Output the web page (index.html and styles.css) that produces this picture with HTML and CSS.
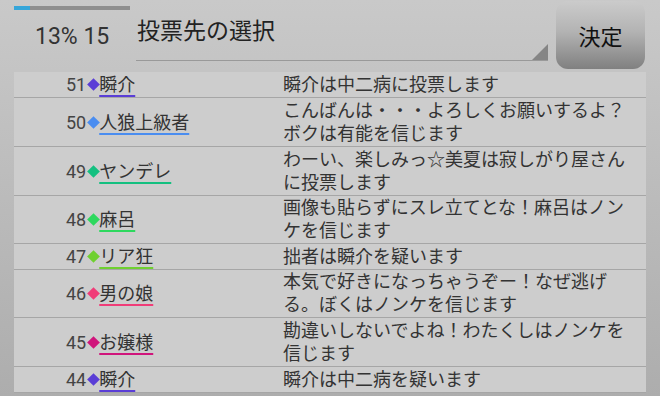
FILE: index.html
```html
<!DOCTYPE html>
<html lang="ja">
<head>
    <meta charset="UTF-8">
    <meta name="viewport" content="width=device-width, initial-scale=1.0">
    <title>投票先の選択</title>
    <link rel="stylesheet" href="styles.css">
</head>
<body>
    <div class="header">
        <div class="status">
            <div class="progress"><div class="progress-fill"></div></div>
            <div class="counter">13% 15</div>
        </div>
        <div class="spinner">
            <span class="spinner-text">投票先の選択</span>
            <span class="spinner-arrow"></span>
        </div>
        <button class="decide">決定</button>
    </div>

    <div class="log">
        <div class="row">
            <div class="who"><span class="num">51</span><span class="mark c-purple"></span><span class="name c-purple">瞬介</span></div>
            <div class="msg">瞬介は中二病に投票します</div>
        </div>
        <div class="row">
            <div class="who"><span class="num">50</span><span class="mark c-blue"></span><span class="name c-blue">人狼上級者</span></div>
            <div class="msg">こんばんは・・・よろしくお願いするよ？ボクは有能を信じます</div>
        </div>
        <div class="row">
            <div class="who"><span class="num">49</span><span class="mark c-teal"></span><span class="name c-teal">ヤンデレ</span></div>
            <div class="msg">わーい、楽しみっ☆美夏は寂しがり屋さんに投票します</div>
        </div>
        <div class="row">
            <div class="who"><span class="num">48</span><span class="mark c-green"></span><span class="name c-green">麻呂</span></div>
            <div class="msg">画像も貼らずにスレ立てとな！麻呂はノンケを信じます</div>
        </div>
        <div class="row">
            <div class="who"><span class="num">47</span><span class="mark c-lime"></span><span class="name c-lime">リア狂</span></div>
            <div class="msg">拙者は瞬介を疑います</div>
        </div>
        <div class="row">
            <div class="who"><span class="num">46</span><span class="mark c-pink"></span><span class="name c-pink">男の娘</span></div>
            <div class="msg">本気で好きになっちゃうぞー！なぜ逃げる。ぼくはノンケを信じます</div>
        </div>
        <div class="row">
            <div class="who"><span class="num">45</span><span class="mark c-magenta"></span><span class="name c-magenta">お嬢様</span></div>
            <div class="msg">勘違いしないでよね！わたくしはノンケを信じます</div>
        </div>
        <div class="row">
            <div class="who"><span class="num">44</span><span class="mark c-purple"></span><span class="name c-purple">瞬介</span></div>
            <div class="msg">瞬介は中二病を疑います</div>
        </div>
    </div>
</body>
</html>
```

FILE: styles.css
```css
body {
    margin: 0;
    width: 660px;
    height: 396px;
    overflow: hidden;
    background: linear-gradient(#c9c9c9, #adadad);
    font-family: Roboto, "Noto Sans CJK JP", sans-serif;
    color: #333;
}

.header {
    display: flex;
    height: 72px;
    padding-left: 14px;
    box-sizing: border-box;
}

.status {
    width: 122px;
}

.progress {
    width: 116px;
    height: 4px;
    margin-top: 6px;
    background-color: #8f8f8f;
}

.progress-fill {
    width: 16px;
    height: 4px;
    background-color: #36a6d9;
}

.counter {
    padding-left: 21px;
    margin-top: 12px;
    font-size: 23px;
    line-height: 30px;
    color: #333;
}

.spinner {
    position: relative;
    width: 412px;
    height: 61px;
    border-bottom: 1px solid #999;
    box-sizing: border-box;
}

.spinner-text {
    display: block;
    padding-left: 1px;
    margin-top: 16px;
    font-size: 23px;
    line-height: 32px;
    color: #222;
}

.spinner-arrow {
    position: absolute;
    right: 0;
    bottom: 0;
    width: 0;
    height: 0;
    border-left: 16px solid transparent;
    border-bottom: 16px solid #858585;
}

.decide {
    width: 89px;
    height: 68px;
    margin: 1px 0 0 8px;
    border: none;
    border-radius: 12px;
    background: linear-gradient(#cbcbcb, #b3b3b3 45%, #808080);
    font-family: Roboto, "Noto Sans CJK JP", sans-serif;
    font-size: 22px;
    color: #111;
    padding: 0;
}

.log {
    width: 632px;
    margin-left: 14px;
    background-color: #cdcdcd;
}

.row {
    display: flex;
    align-items: center;
    padding: 1px 0;
    border-bottom: 1px solid #a6a6a6;
    font-size: 18px;
    line-height: 23px;
}

.row:nth-child(4), .row:nth-child(6) {
    padding-top: 0;
}

.who {
    width: 217px;
    padding-left: 52px;
    display: flex;
    align-items: center;
}

.num {
    color: #444;
}

.mark {
    display: inline-block;
    width: 9px;
    height: 9px;
    margin: 0 1px 0 3px;
    transform: rotate(45deg);
}

.name {
    text-decoration: underline;
    text-decoration-thickness: 2px;
    text-underline-offset: 4px;
    color: #333;
}

.msg {
    width: 350px;
    color: #333;
}

.mark.c-purple { background-color: #5a3ed6; }
.name.c-purple { text-decoration-color: #5a3ed6; }
.mark.c-blue { background-color: #4a8df0; }
.name.c-blue { text-decoration-color: #4a8df0; }
.mark.c-teal { background-color: #14c080; }
.name.c-teal { text-decoration-color: #14c080; }
.mark.c-green { background-color: #2ed85e; }
.name.c-green { text-decoration-color: #2ed85e; }
.mark.c-lime { background-color: #6fd030; }
.name.c-lime { text-decoration-color: #6fd030; }
.mark.c-pink { background-color: #f03c78; }
.name.c-pink { text-decoration-color: #f03c78; }
.mark.c-magenta { background-color: #d0157c; }
.name.c-magenta { text-decoration-color: #d0157c; }
```
